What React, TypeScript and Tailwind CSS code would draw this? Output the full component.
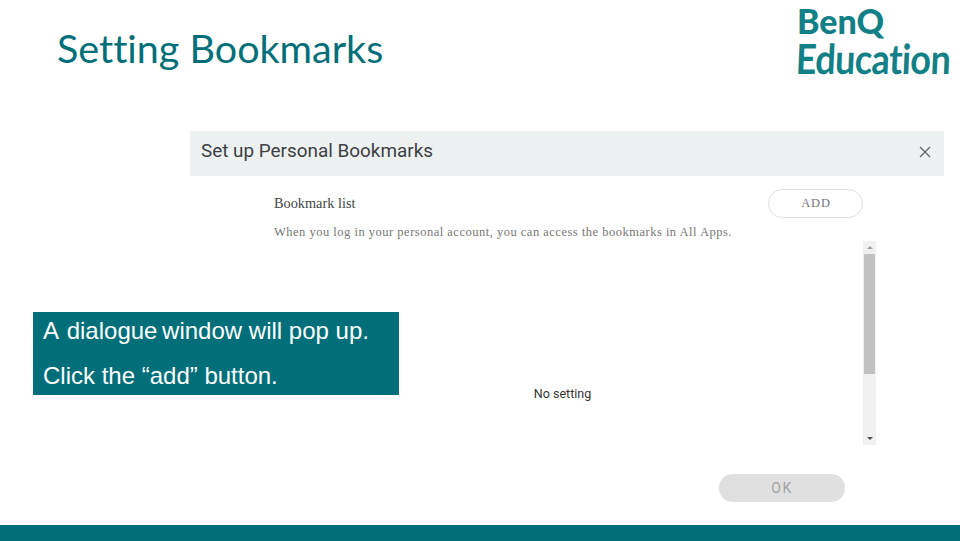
export default function App() {
  return (
    <div className="relative w-[960px] h-[541px] flex flex-col bg-white overflow-hidden">
      {/* Slide header */}
      <div className="h-[131px] flex items-start justify-between shrink-0">
        <h1 className="ml-[57px] mt-[24px] text-[39.5px] leading-[48px] text-[#006F79] font-['Lato',sans-serif] [font-variant-ligatures:none]">Setting Bookmarks</h1>
        <div className="mt-[2px] mr-[6px] w-[157px] text-[#128087] font-['Lato',sans-serif] font-bold">
          <div className="text-[34px] leading-[38px] font-black">BenQ</div>
          <div className="text-[36px] leading-[36px] -mt-[3px] tracking-[-0.6px] -skew-x-3 scale-y-115 origin-top">Education</div>
        </div>
      </div>

      {/* Dialog */}
      <div className="ml-[190px] w-[754px] flex-1 flex flex-col">
        <div className="h-[45px] bg-[#EEF1F2] flex items-center justify-between pl-[11px] pr-[12px] shrink-0">
          <span className="text-[18.9px] -mt-[4px] text-[#3c4043] font-['Roboto',sans-serif]">Set up Personal Bookmarks</span>
          <svg className="-mt-[3px]" width="14" height="14" viewBox="0 0 14 14" fill="none" stroke="#5f6368" strokeWidth="1.2">
            <path d="M2 2l10 10M12 2L2 12" />
          </svg>
        </div>

        <div className="pl-[84px] pr-[81px] pt-[13px] flex items-center justify-between">
          <span className="text-[14.3px] text-[#444] font-['Liberation_Serif',serif]">Bookmark list</span>
          <button className="w-[95px] h-[29px] pl-[1px] rounded-full border-[1.5px] border-[#e0e0e0] text-[12.5px] tracking-[0.8px] text-[#777] font-['Liberation_Serif',serif]">ADD</button>
        </div>
        <p className="pl-[84px] mt-[6px] text-[12.5px] leading-[16px] tracking-[0.5px] text-[#777] font-['Liberation_Serif',serif]">
          When you log in your personal account, you can access the bookmarks in All Apps.
        </p>

        {/* List with scrollbar */}
        <div className="mt-[1px] h-[204px] flex shrink-0">
          <div className="w-[673px] flex items-center justify-center pl-[72px] pt-[102px] text-[12.5px] text-[#333] font-['Roboto',sans-serif]">No setting</div>
          <div className="w-[13px] bg-[#F1F1F1] flex flex-col items-center">
            <div className="h-[13px] flex items-center justify-center">
              <div className="w-0 h-0 border-x-[3px] border-x-transparent border-b-[3px] border-b-[#a0a0a0]" />
            </div>
            <div className="w-[11px] h-[120px] bg-[#C1C1C1]" />
            <div className="flex-1" />
            <div className="h-[13px] flex items-center justify-center">
              <div className="w-0 h-0 border-x-[3px] border-x-transparent border-t-[3px] border-t-[#505050]" />
            </div>
          </div>
        </div>

        <div className="mt-[29px] ml-[529px]">
          <button className="w-[126px] h-[28px] rounded-full bg-[#E0E0E0] text-[14px] tracking-[1.5px] text-[#A3A3A3] font-['Roboto',sans-serif]">OK</button>
        </div>
      </div>

      {/* Footer bar */}
      <div className="h-[16px] bg-[#006F79] shrink-0" />

      {/* Callout over the slide */}
      <div className="absolute left-[33px] top-[312px] w-[366px] h-[83px] bg-[#006F79] pl-[10px] text-white text-[24px] font-['Liberation_Sans',sans-serif]">
        <div className="leading-[38px]">A<span className="ml-[1px]"> dialogue</span><span className="-ml-[2px]"> window</span> will pop up.</div>
        <div className="leading-[45px] mt-[3px]">Click the “add” button.</div>
      </div>
    </div>
  )
}
